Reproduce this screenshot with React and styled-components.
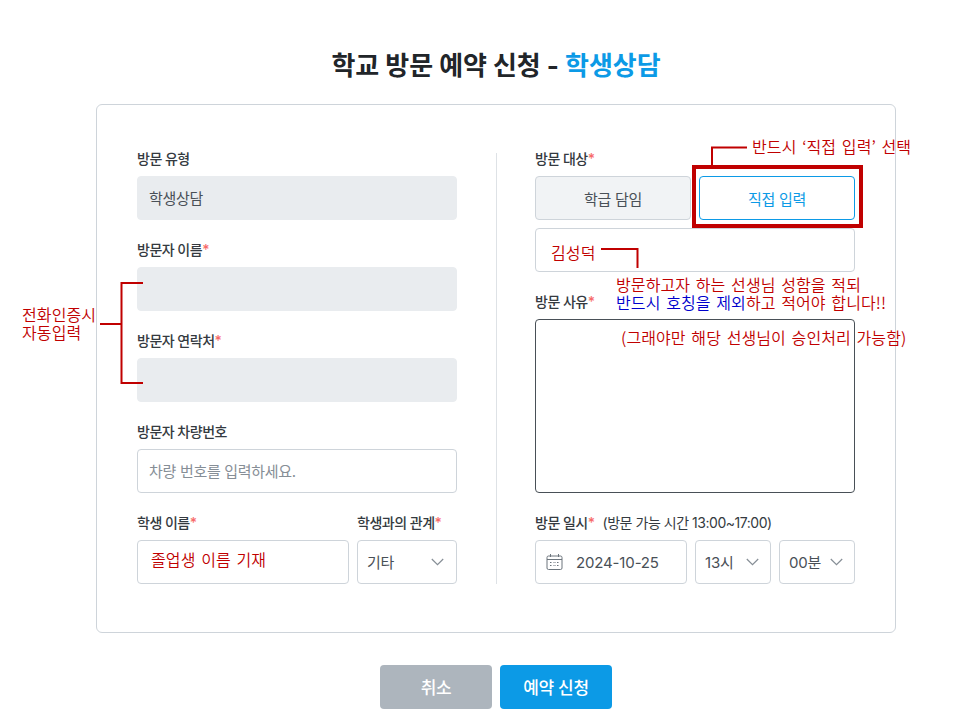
import React from 'react';
import styled, { createGlobalStyle } from 'styled-components';

const GlobalStyle = createGlobalStyle`
  html, body { margin: 0; padding: 0; background: #fff; }
  body { font-family: Inter, "Noto Sans CJK KR", sans-serif; color: #343a40; overflow: hidden; }
`;

const Page = styled.div`
  position: relative;
  width: 972px;
  height: 723px;
  overflow: hidden;
`;
const Wrapper = styled.div`
  width: 800px;
  margin-left: 96px;
  padding-top: 54px;
`;
const Title = styled.h1`
  margin: 0 0 27px;
  height: 23px;
  line-height: 23px;
  font-size: 26px;
  font-weight: 700;
  letter-spacing: -0.05px;
  text-align: center;
  color: #212529;
  span { color: #0c9ae6; }
`;
const Card = styled.div`
  box-sizing: border-box;
  height: 529px;
  padding: 44px 40px 0;
  display: grid;
  grid-template-columns: 320px 320px;
  justify-content: space-between;
  border: 1px solid #ced4da;
  border-radius: 6px;
  position: relative;
`;
const Divider = styled.div`
  position: absolute;
  left: 399px;
  top: 48px;
  bottom: 48px;
  width: 1px;
  background: #dee2e6;
`;
const Column = styled.div`
  display: flex;
  flex-direction: column;
  gap: 20px;
`;
const Field = styled.div`
  display: flex;
  flex-direction: column;
  flex: ${p => p.$flex || 'none'};
  min-width: 0;
`;
const Label = styled.label`
  display: block;
  height: 20px;
  line-height: 20px;
  margin-bottom: 7px;
  font-size: 14px;
  font-weight: 500;
  letter-spacing: -0.5px;
  color: #343a40;
  white-space: nowrap;
  em { font-style: normal; color: #f76a6a; }
  small { font-size: 14px; margin-left: 8px; font-weight: 400; letter-spacing: -0.47px; }
`;
const Input = styled.div`
  box-sizing: border-box;
  height: 44px;
  padding: 0 11px 2px;
  display: flex;
  align-items: center;
  font-size: 15px;
  letter-spacing: -0.3px;
  color: ${p => (p.$filled ? '#495057' : '#868e96')};
  background: ${p => (p.$disabled ? '#e9ecef' : '#fff')};
  border: 1px solid ${p => (p.$disabled ? '#e9ecef' : '#ced4da')};
  border-radius: 4px;
`;
const TextArea = styled.div`
  box-sizing: border-box;
  height: 174px;
  background: #fff;
  border: 1px solid #495057;
  border-radius: 4px;
`;
const Row = styled.div`
  display: flex;
  gap: 8px;
`;
const Toggle = styled.button`
  flex: 1;
  height: 44px;
  padding: 0;
  font-family: inherit;
  font-size: 15px;
  font-weight: 400;
  letter-spacing: -0.3px;
  color: ${p => (p.$active ? '#0c9ae6' : '#495057')};
  background: ${p => (p.$active ? '#fff' : '#f1f3f5')};
  border: 1px solid ${p => (p.$active ? '#0c9ae6' : '#ced4da')};
  border-radius: 4px;
`;
const Stack = styled.div`
  display: flex;
  flex-direction: column;
  gap: 8px;
`;
const Select = styled.div`
  box-sizing: border-box;
  width: ${p => p.$width}px;
  height: 44px;
  padding: 0 ${p => p.$right || 12}px 2px 9px;
  display: flex;
  align-items: center;
  justify-content: space-between;
  font-size: 15px;
  letter-spacing: -0.2px;
  color: #495057;
  background: #fff;
  border: 1px solid #ced4da;
  border-radius: 4px;
  svg { position: relative; top: 1px; }
`;
const DateBox = styled.div`
  box-sizing: border-box;
  width: 152px;
  height: 44px;
  padding: 0 10px;
  display: flex;
  align-items: center;
  gap: 13px;
  font-size: 15px;
  letter-spacing: -0.15px;
  color: #495057;
  border: 1px solid #ced4da;
  border-radius: 4px;
`;
const Actions = styled.div`
  margin-top: 32px;
  display: flex;
  justify-content: center;
  gap: 8px;
`;
const Button = styled.button`
  width: 112px;
  height: 44px;
  padding: 0 0 2px;
  font-family: inherit;
  font-size: 17px;
  font-weight: 500;
  letter-spacing: -0.3px;
  color: #fff;
  background: ${p => (p.$primary ? '#0c9ae6' : '#adb5bd')};
  border: 0;
  border-radius: 4px;
`;
const Note = styled.div`
  position: absolute;
  left: ${p => p.$x}px;
  top: ${p => p.$y}px;
  line-height: 18px;
  font-family: "Noto Sans CJK KR", sans-serif;
  font-size: 16px;
  font-weight: 350;
  word-spacing: 2px;
  letter-spacing: 0.1px;
  color: #c00000;
  white-space: nowrap;
  span { color: #0000cc; }
`;
const Marks = styled.svg`
  position: absolute;
  left: 0;
  top: 0;
  pointer-events: none;
`;

function Chevron() {
  return (
    <svg width="13" height="8" viewBox="0 0 13 8" fill="none" stroke="#868e96" strokeWidth="1.2">
      <path d="M.8 1l5.700 5.700L12.200 1" />
    </svg>
  );
}

function CalendarIcon() {
  return (
    <svg width="17" height="18" viewBox="0 0 17 18" fill="none" stroke="#6c757d" strokeWidth="1">
      <rect x="1" y="3" width="15" height="13.500" rx="1.500" />
      <path d="M1 6.500h15M4.500 1v3M12.500 1v3" />
      <path d="M4 9.500h2M7.500 9.500h2M11 9.500h2M4 12.500h2M7.500 12.500h2M11 12.500h2" strokeDasharray="1 .5" />
    </svg>
  );
}

function App() {
  return (
    <Page>
      <GlobalStyle />
      <Wrapper>
        <Title>학교 방문 예약 신청 - <span>학생상담</span></Title>
        <Card>
          <Divider />
          <Column>
            <Field>
              <Label>방문 유형</Label>
              <Input $disabled $filled>학생상담</Input>
            </Field>
            <Field>
              <Label>방문자 이름<em>*</em></Label>
              <Input $disabled />
            </Field>
            <Field>
              <Label>방문자 연락처<em>*</em></Label>
              <Input $disabled />
            </Field>
            <Field>
              <Label>방문자 차량번호</Label>
              <Input>차량 번호를 입력하세요.</Input>
            </Field>
            <Row>
              <Field $flex="1">
                <Label>학생 이름<em>*</em></Label>
                <Input />
              </Field>
              <Field>
                <Label>학생과의 관계<em>*</em></Label>
                <Select $width={100}>기타<Chevron /></Select>
              </Field>
            </Row>
          </Column>
          <Column>
            <Field>
              <Label>방문 대상<em>*</em></Label>
              <Stack>
                <Row>
                  <Toggle>학급 담임</Toggle>
                  <Toggle $active>직접 입력</Toggle>
                </Row>
                <Input />
              </Stack>
            </Field>
            <Field>
              <Label>방문 사유<em>*</em></Label>
              <TextArea />
            </Field>
            <Field>
              <Label>방문 일시<em>*</em><small>(방문 가능 시간 13:00~17:00)</small></Label>
              <Row>
                <DateBox><CalendarIcon />2024-10-25</DateBox>
                <Select $width={76} $right={11}>13시<Chevron /></Select>
                <Select $width={76} $right={11}>00분<Chevron /></Select>
              </Row>
            </Field>
          </Column>
        </Card>
        <Actions>
          <Button>취소</Button>
          <Button $primary>예약 신청</Button>
        </Actions>
      </Wrapper>

      <Marks width="972" height="723" fill="none" stroke="#c00000">
        <rect x="694" y="167" width="167" height="59" strokeWidth="4" />
        <path d="M712 165V147.500H747" strokeWidth="2" />
        <path d="M601 249H637.500V268" strokeWidth="2" />
        <path d="M143 283H121.500V383H143M100 324H121" strokeWidth="2" />
      </Marks>
      <Note $x={22} $y={305}>전화인증시<br />자동입력</Note>
      <Note $x={752} $y={137}>반드시 ‘직접 입력’ 선택</Note>
      <Note $x={551} $y={243}>김성덕</Note>
      <Note $x={616} $y={275}>방문하고자 하는 선생님 성함을 적되</Note>
      <Note $x={616} $y={293}><span>반드시 호칭을 제외</span>하고 적어야 합니다!!</Note>
      <Note $x={621} $y={328}>(그래야만 해당 선생님이 승인처리 가능함)</Note>
      <Note $x={151} $y={550}>졸업생 이름 기재</Note>
    </Page>
  );
}

export default App;
